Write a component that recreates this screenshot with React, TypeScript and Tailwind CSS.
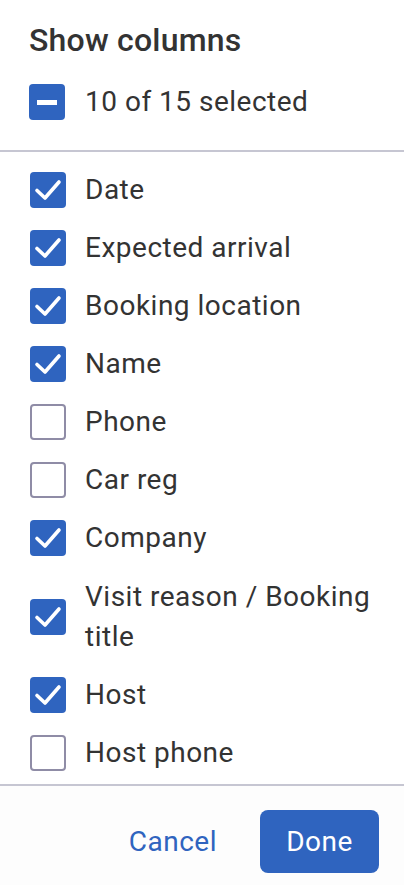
import React from "react";

const columns = [
  { label: "Date", checked: true },
  { label: "Expected arrival", checked: true },
  { label: "Booking location", checked: true },
  { label: "Name", checked: true },
  { label: "Phone", checked: false },
  { label: "Car reg", checked: false },
  { label: "Company", checked: true },
  { label: "Visit reason / Booking title", checked: true },
  { label: "Host", checked: true },
  { label: "Host phone", checked: false },
];

function Box({ state }: { state: "on" | "off" | "some" }) {
  if (state === "off") {
    return (
      <span className="box-border block h-9 w-9 shrink-0 rounded-[4px] border-2 border-[#8f8ca6] bg-white" />
    );
  }
  return (
    <span className="flex h-9 w-9 shrink-0 items-center justify-center rounded-[4px] bg-[#2f64bf]">
      {state === "on" ? (
        <svg width="36" height="36" viewBox="0 0 36 36" fill="none">
          <path
            d="M7 18.5l8 7.5L29 10"
            stroke="white"
            strokeWidth="3.6"
            strokeLinecap="round"
            strokeLinejoin="round"
          />
        </svg>
      ) : (
        <span className="block h-[5px] w-5 bg-white" />
      )}
    </span>
  );
}

export default function App() {
  return (
    <div
      className="flex h-[885px] w-[404px] flex-col overflow-hidden bg-white text-[#333333]"
      style={{ fontFamily: "Roboto, 'Liberation Sans', sans-serif" }}
    >
      <div className="px-[29px] pt-5 pb-7">
        <h2 className="text-[32px] leading-10 font-medium tracking-[0.2px]">
          Show columns
        </h2>
        <label className="mt-[22px] flex items-center gap-5">
          <Box state="some" />
          <span className="text-[28px] leading-10 tracking-[0.5px]">
            10 of 15 selected
          </span>
        </label>
      </div>
      <div className="h-[2px] shrink-0 bg-[#c6c6d2]" />
      <div className="flex-1 overflow-hidden pt-[9px] pr-7 pl-[30px]">
        {columns.map((c) => (
          <label
            key={c.label}
            className={
              c.label.length > 20
                ? "flex items-center gap-[19px] pt-[10px] pb-[9px]"
                : "flex items-center gap-[19px] py-[9px]"
            }
          >
            <Box state={c.checked ? "on" : "off"} />
            <span className="text-[28px] leading-10 tracking-[0.5px]">
              {c.label}
            </span>
          </label>
        ))}
      </div>
      <div className="h-[2px] shrink-0 bg-[#c6c6d2]" />
      <div className="flex h-[99px] shrink-0 items-start justify-end gap-[43px] bg-[#fdfdfd] pt-6 pr-[25px]">
        <button className="h-[63px] text-[28px] leading-10 tracking-[0.5px] text-[#2f64bf]">
          Cancel
        </button>
        <button className="h-[63px] w-[119px] rounded-[8px] bg-[#2f64bf] text-[28px] tracking-[0.5px] text-white">
          Done
        </button>
      </div>
    </div>
  );
}
